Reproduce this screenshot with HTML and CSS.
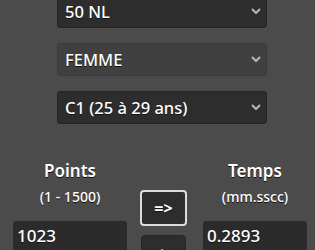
FILE: index.html
```html
<!DOCTYPE html>
<html lang="fr">
<head>
    <meta charset="UTF-8">
    <meta name="viewport" content="width=device-width, initial-scale=1.0">
    <title>Points natation</title>
    <link rel="stylesheet" href="styles.css">
</head>
<body>
    <main class="page">
        <div class="selects">
            <div class="select">
                <span>50 NL</span>
                <svg class="carat" width="10" height="6" viewBox="0 0 10 6"><path d="M1 1 L5 5 L9 1" fill="none" stroke="#b8b8b8" stroke-width="2"/></svg>
            </div>
            <div class="select hover">
                <span>FEMME</span>
                <svg class="carat" width="10" height="6" viewBox="0 0 10 6"><path d="M1 1 L5 5 L9 1" fill="none" stroke="#b8b8b8" stroke-width="2"/></svg>
            </div>
            <div class="select">
                <span>C1 (25 à 29 ans)</span>
                <svg class="carat" width="10" height="6" viewBox="0 0 10 6"><path d="M1 1 L5 5 L9 1" fill="none" stroke="#b8b8b8" stroke-width="2"/></svg>
            </div>
        </div>

        <div class="convert">
            <div class="col col-left">
                <div class="label">Points</div>
                <div class="hint">(1 - 1500)</div>
                <div class="field">1023</div>
            </div>
            <div class="buttons">
                <button class="btn focus">=&gt;</button>
                <button class="btn">&lt;=</button>
            </div>
            <div class="col col-right">
                <div class="label">Temps</div>
                <div class="hint">(mm.sscc)</div>
                <div class="field">0.2893</div>
            </div>
        </div>
    </main>
</body>
</html>
```

FILE: styles.css
```css
body {
    font-family: "Noto Sans", sans-serif;
    margin: 0;
    padding: 0;
    background-color: #4b4b4b;
    color: #fff;
    text-shadow: 0 1px 0 #111;
    overflow: hidden;
    height: 250px;
}
.page {
    margin-top: -5px;
}
.selects {
    display: flex;
    flex-direction: column;
    gap: 15px;
    width: 210px;
    margin-left: 57px;
}
.select {
    height: 33px;
    box-sizing: border-box;
    background-color: #2d2d2d;
    border: 1px solid #262626;
    border-radius: 3px;
    display: flex;
    align-items: center;
    justify-content: space-between;
    padding: 0 5px 0 7px;
    font-size: 16.5px;
    font-weight: 500;
}
.select.hover {
    background-color: #404040;
    border-color: #3b3b3b;
}
.carat {
    margin-top: -2px;
}
.convert {
    display: flex;
    margin-top: 36px;
    padding-left: 13px;
}
.col {
    display: flex;
    flex-direction: column;
    align-items: center;
}
.col-left {
    width: 114px;
}
.col-right {
    width: 104px;
}
.label {
    font-size: 17px;
    font-weight: 600;
    line-height: 22px;
}
.hint {
    font-size: 14px;
    font-weight: 500;
    line-height: 18px;
    margin-top: 6px;
}
.field {
    align-self: stretch;
    margin-top: 15px;
    height: 34px;
    box-sizing: border-box;
    background-color: #2b2b2b;
    border-radius: 3px;
    padding: 3px 4px;
    font-size: 17px;
    font-weight: 500;
    line-height: 24px;
}
.buttons {
    display: flex;
    flex-direction: column;
    align-items: center;
    gap: 9px;
    width: 47px;
    margin: 30px 16px 0 13px;
}
.btn {
    width: 45px;
    height: 35px;
    flex-shrink: 0;
    background-color: #2d2d2d;
    border: 1px solid #262626;
    border-radius: 4px;
    color: #fff;
    font-family: "Noto Sans", sans-serif;
    font-size: 16px;
    font-weight: 700;
    text-shadow: 0 1px 0 #111;
    padding: 0;
}
.btn.focus {
    width: 47px;
    height: 36px;
    border: 2px solid #ddd;
}
```
